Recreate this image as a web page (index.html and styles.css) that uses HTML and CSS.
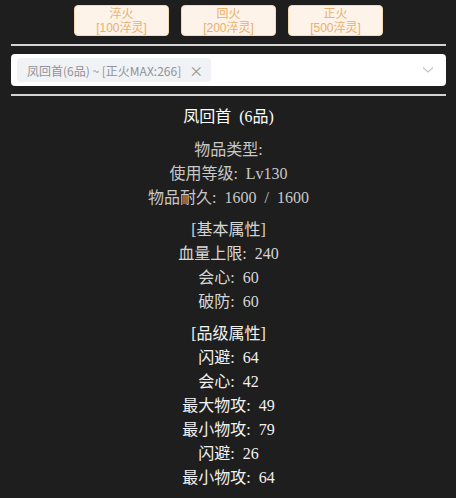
FILE: index.html
```html
<!DOCTYPE html>
<html lang="zh">
<head>
<meta charset="utf-8">
<link rel="stylesheet" href="styles.css">
</head>
<body>
<div class="page">
  <div class="btn-row">
    <button class="btn"><span class="btn-line">淬火</span><span class="btn-line">[100淬灵]</span></button>
    <button class="btn"><span class="btn-line">回火</span><span class="btn-line">[200淬灵]</span></button>
    <button class="btn"><span class="btn-line">正火</span><span class="btn-line">[500淬灵]</span></button>
  </div>
  <div class="rule"></div>
  <div class="select">
    <span class="tag">凤回首(6品) ~ [正火MAX:266]<span class="tag-close">×</span></span>
    <svg class="chevron" width="12" height="8" viewBox="0 0 12 8"><path d="M1 1.5 L6 6 L11 1.5" fill="none" stroke="#c0c4cc" stroke-width="1.2"/></svg>
  </div>
  <div class="rule"></div>
  <div class="info">
    <div class="title">凤回首 (6品)</div>
    <div class="group g1">
      <div>物品类型:</div>
      <div>使用等级: Lv130</div>
      <div>物品耐久: 1600 / 1600</div>
    </div>
    <div class="group g2">
      <div>[基本属性]</div>
      <div>血量上限: 240</div>
      <div>会心: 60</div>
      <div>破防: 60</div>
    </div>
    <div class="group g3">
      <div>[品级属性]</div>
      <div>闪避: 64</div>
      <div>会心: 42</div>
      <div>最大物攻: 49</div>
      <div>最小物攻: 79</div>
      <div>闪避: 26</div>
      <div>最小物攻: 64</div>
    </div>
  </div>
</div>
</body>
</html>
```

FILE: styles.css
```css
html, body {
  margin: 0;
  padding: 0;
  background: #1e1e1e;
}
body {
  font-family: "Liberation Serif", "Noto Sans CJK SC", serif;
  color: #ddd;
}
.page {
  padding: 5px 10px 0 11px;
}
.btn-row {
  display: flex;
  justify-content: center;
  gap: 12px;
}
.btn {
  width: 95px;
  height: 31px;
  padding: 0;
  background: #fdf3e8;
  border: 1px solid #f5dab1;
  border-radius: 4px;
  color: #eab06a;
  font-family: "Liberation Sans", "Noto Sans CJK SC", sans-serif;
  font-size: 12px;
  display: flex;
  flex-direction: column;
  align-items: center;
  justify-content: center;
}
.btn-line {
  display: block;
  line-height: 14px;
  height: 14px;
  font-size: 12px;
}
.rule {
  height: 2px;
  background: #d4d4d4;
  margin: 8px 0;
}
.select {
  height: 32px;
  background: #fff;
  border-radius: 4px;
  display: flex;
  align-items: center;
  justify-content: space-between;
  padding: 0 12px 0 6px;
}
.tag {
  display: flex;
  align-items: center;
  height: 24px;
  padding: 0 8px 0 10px;
  background: #f0f2f5;
  border-radius: 4px;
  color: #909399;
  font-family: "Noto Sans CJK SC", sans-serif;
  font-size: 12px;
}
.tag-close {
  margin-left: 8px;
  font-size: 14px;
  color: #909399;
}
.chevron {
  display: block;
}
.info {
  text-align: center;
  font-size: 16px;
  line-height: 24px;
  padding-top: 1px;
  word-spacing: 4px;
}
.title {
  color: #fff;
  margin-bottom: 9px;
}
.group {
  margin-bottom: 8px;
}
.g1 { color: #c8c8c8; }
.g2 { color: #d6d6d6; }
.g3 { color: #f2f2f2; }
```
